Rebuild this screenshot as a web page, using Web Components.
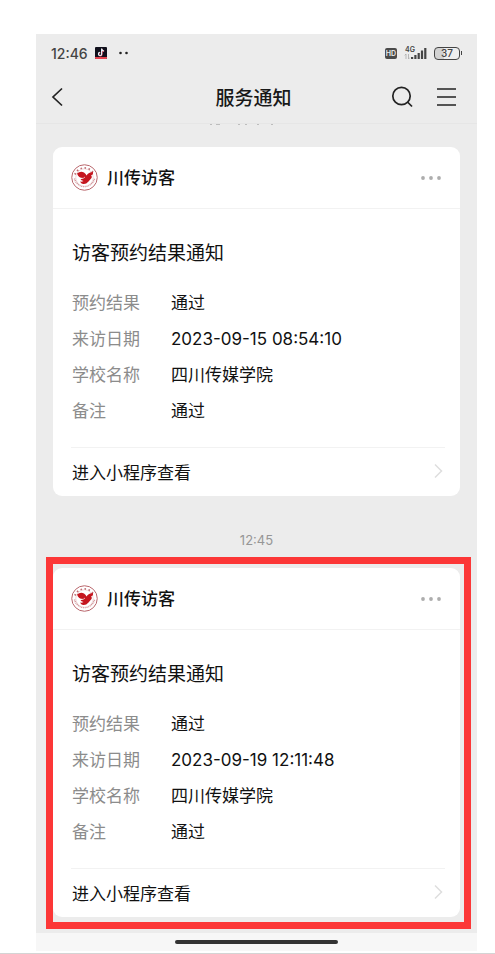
<!DOCTYPE html>
<html lang="zh-CN">
<head>
<meta charset="utf-8">
<meta name="viewport" content="width=device-width, initial-scale=1">
<title>服务通知</title>
<style>
    body {
        margin: 0;
        background: #fff;
        color: #191919;
        font-family: Inter, "Noto Sans CJK SC", sans-serif;
        font-size: 17px;
    }
</style>
</head>
<body>
<notice-page>
    <status-bar time="12:46" battery="37"></status-bar>
    <nav-bar heading="服务通知"></nav-bar>
    <message-feed>
        <notice-card sender="川传访客" heading="访客预约结果通知" result="通过" date="2023-09-15 08:54:10" school="四川传媒学院" remark="通过"></notice-card>
        <time-stamp>12:45</time-stamp>
        <focus-frame>
            <notice-card sender="川传访客" heading="访客预约结果通知" result="通过" date="2023-09-19 12:11:48" school="四川传媒学院" remark="通过"></notice-card>
        </focus-frame>
    </message-feed>
    <home-bar></home-bar>
</notice-page>

<script>
class NoticePage extends HTMLElement {
    constructor() {
        super();
        this.attachShadow({ mode: 'open' });
        this.shadowRoot.innerHTML = `
            <style>
                :host {
                    display: block;
                    padding: 34px 18px 2px 36px;
                    border-bottom: 1px solid #d4d4d4;
                }

                main {
                    display: flex;
                    flex-direction: column;
                    background: #ececec;
                }
            </style>
            <main><slot></slot></main>
        `;
    }
}

class StatusBar extends HTMLElement {
    constructor() {
        super();
        this.attachShadow({ mode: 'open' });
    }

    connectedCallback() {
        this.shadowRoot.innerHTML = `
            <style>
                :host {
                    display: flex;
                    align-items: center;
                    justify-content: space-between;
                    height: 38px;
                    padding: 0 15px;
                    color: #444;
                }

                div {
                    display: flex;
                    align-items: center;
                    gap: 7px;
                }

                time {
                    font-size: 14px;
                    font-weight: 500;
                }

                .dots {
                    margin-left: 5px;
                }

                .hd {
                    padding: 0 1px;
                    border-radius: 2px;
                    background: #4a4a4a;
                    color: #eee;
                    font-size: 7px;
                    font-weight: 600;
                    line-height: 11px;
                }

                .battery {
                    display: flex;
                    align-items: center;
                    gap: 1px;
                }

                .level {
                    box-sizing: border-box;
                    width: 26px;
                    border: 1px solid #444;
                    border-radius: 4px;
                    background: linear-gradient(90deg, #d2d2d2 37%, #eee 37%);
                    font-size: 10px;
                    font-weight: 500;
                    line-height: 11px;
                    text-align: center;
                }

                .cap {
                    width: 1px;
                    height: 4px;
                    background: #444;
                }
            </style>
            <div>
                <time>${this.getAttribute('time')}</time>
                <svg width="12" height="12" viewBox="0 0 12 12">
                    <rect width="12" height="12" rx="1" fill="#10101c"/>
                    <path d="M0 10h12v1q0 1-1 1H1q-1 0-1-1z" fill="#e5434f"/>
                    <path d="M6.6 1.5v5.4a1.6 1.6 0 1 1-1.6-1.6M6.6 2q.4 1.7 2.2 1.9" fill="none" stroke="#ed5870" stroke-width="1.2" transform="translate(.4 .3)"/>
                    <path d="M6.6 1.5v5.4a1.6 1.6 0 1 1-1.6-1.6M6.6 2q.4 1.7 2.2 1.9" fill="none" stroke="#e2fbff" stroke-width="1.1"/>
                </svg>
                <svg class="dots" width="9" height="4" viewBox="0 0 9 4">
                    <circle cx="1.5" cy="2" r="1.3" fill="#222"/>
                    <circle cx="7.5" cy="2" r="1.3" fill="#222"/>
                </svg>
            </div>
            <div>
                <span class="hd">HD</span>
                <svg width="23" height="15" viewBox="0 0 23 15">
                    <text x="1" y="6" font-size="7" font-weight="600" fill="#444">4G</text>
                    <path d="M2 8v5M.7 9.3L2 8M4.5 8v5l1.2-1.3" fill="none" stroke="#aaa" stroke-width=".8"/>
                    <path d="M7 11h2.200v2H7zM10.300 9h2.200v4h-2.200zM13.600 7h2.200v6h-2.200zM16.900 4.500h2.200V13h-2.200zM20.200 2h2.200v11h-2.200z" fill="#444"/>
                </svg>
                <span class="battery"><span class="level">${this.getAttribute('battery')}</span><span class="cap"></span></span>
            </div>
        `;
    }
}

class NavBar extends HTMLElement {
    constructor() {
        super();
        this.attachShadow({ mode: 'open' });
    }

    connectedCallback() {
        this.shadowRoot.innerHTML = `
            <style>
                :host {
                    display: block;
                    border-bottom: 1px solid #e6e6e6;
                }

                header {
                    display: grid;
                    grid-template-columns: 1fr auto 1fr;
                    align-items: center;
                    height: 49px;
                    padding: 0 20px 2px 14px;
                }

                h1 {
                    margin: 0;
                    font-size: 19px;
                    font-weight: 500;
                }

                button {
                    display: flex;
                    padding: 0;
                    border: 0;
                    background: none;
                    color: #222;
                    cursor: pointer;
                }

                .actions {
                    display: flex;
                    justify-content: flex-end;
                    gap: 22px;
                }

                svg {
                    fill: none;
                    stroke: currentColor;
                    stroke-width: 1.7;
                }
            </style>
            <header>
                <button type="button" aria-label="返回">
                    <svg width="14" height="22" viewBox="0 0 14 22"><path d="M12 2.500L3 11l9 8.500"/></svg>
                </button>
                <h1>${this.getAttribute('heading')}</h1>
                <div class="actions">
                    <button type="button" aria-label="搜索">
                        <svg width="24" height="24" viewBox="0 0 24 24"><circle cx="10.500" cy="11" r="8.700"/><path d="M16.500 17l4.500 4.500"/></svg>
                    </button>
                    <button type="button" aria-label="菜单">
                        <svg width="20" height="24" viewBox="0 0 20 24"><path d="M0 4h19M0 12h19M0 20h19"/></svg>
                    </button>
                </div>
            </header>
        `;
    }
}

class MessageFeed extends HTMLElement {
    constructor() {
        super();
        this.attachShadow({ mode: 'open' });
        this.shadowRoot.innerHTML = `
            <style>
                :host {
                    display: block;
                    padding: 0 17px 16px;
                }

                .edge {
                    display: block;
                    height: 23px;
                    margin: 0 auto;
                }
            </style>
            <!-- lower edge of the timestamp scrolled under the nav bar -->
            <svg class="edge" width="100" height="23" viewBox="0 0 100 23">
                <path d="M3 .5h2M9 .5h4M31 .5h2M38 .5h2M50 .5h2M64 .5h2" stroke="#bdbdbd"/>
            </svg>
            <slot></slot>
        `;
    }
}

class TimeStamp extends HTMLElement {
    constructor() {
        super();
        this.attachShadow({ mode: 'open' });
        this.shadowRoot.innerHTML = `
            <style>
                :host {
                    display: block;
                    padding: 34px 0 18px;
                    color: #969696;
                    font-size: 13px;
                    line-height: 20px;
                    text-align: center;
                }
            </style>
            <time><slot></slot></time>
        `;
    }
}

class FocusFrame extends HTMLElement {
    constructor() {
        super();
        this.attachShadow({ mode: 'open' });
        this.shadowRoot.innerHTML = `
            <style>
                :host {
                    display: block;
                    position: relative;
                }

                :host::after {
                    content: "";
                    position: absolute;
                    inset: -11px -11px -12px -7px;
                    border: 7px solid #fc3737;
                    pointer-events: none;
                }
            </style>
            <slot></slot>
        `;
    }
}

class SchoolLogo extends HTMLElement {
    constructor() {
        super();
        this.attachShadow({ mode: 'open' });
        this.shadowRoot.innerHTML = `
            <style>
                :host {
                    display: flex;
                }
            </style>
            <svg width="27" height="27" viewBox="0 0 54 54">
                <circle cx="27" cy="27" r="25.500" fill="#fff" stroke="#b9666c" stroke-width="2"/>
                <path d="M8 21a20.500 20.500 0 0 1 38 0" fill="none" stroke="#bd6a70" stroke-width="4" stroke-dasharray="3 5"/>
                <path d="M7 29a20.500 20.500 0 0 0 40 0" fill="none" stroke="#cf9195" stroke-width="3" stroke-dasharray="2 1.500"/>
                <circle cx="27" cy="27" r="17.500" fill="#fff" stroke="#e0b3b6" stroke-width="1"/>
                <path d="M12 19q7-6 14-2 4 3 5 6 4-7 13-7 1 5-4 7 3 2 1 5-3 3-6 7-5 6-11 5-4-1-6-5 4 1 7-1-5-1-6-4 3 0 5-2-9 0-12-9z" fill="#c5161f"/>
                <path d="M19 29q6 1 9-3" fill="none" stroke="#fff" stroke-width="1.300"/>
            </svg>
        `;
    }
}

class NoticeCard extends HTMLElement {
    constructor() {
        super();
        this.attachShadow({ mode: 'open' });
    }

    connectedCallback() {
        this.shadowRoot.innerHTML = `
            <style>
                :host {
                    display: block;
                    border-radius: 9px;
                    background: #fff;
                    color: #111;
                }

                header {
                    display: flex;
                    align-items: center;
                    gap: 9px;
                    height: 61px;
                    padding: 0 19px 0 18px;
                    border-bottom: 1px solid #f2f2f2;
                }

                h2, h3, dl, dd {
                    margin: 0;
                    font-weight: 400;
                }

                h2 {
                    flex: 1;
                    font-size: 17px;
                    font-weight: 500;
                    line-height: 24px;
                }

                button {
                    display: flex;
                    padding: 0;
                    border: 0;
                    background: none;
                    cursor: pointer;
                }

                .body {
                    padding: 31px 19px 24px;
                }

                h3 {
                    margin-bottom: 23px;
                    font-size: 19px;
                    line-height: 28px;
                }

                dl {
                    display: grid;
                    grid-template-columns: 87px 1fr;
                    gap: 12px;
                    line-height: 24px;
                }

                dt {
                    color: #8c8c8c;
                }

                a {
                    display: flex;
                    align-items: center;
                    justify-content: space-between;
                    height: 46px;
                    margin: 0 15px 0 18px;
                    padding: 0 0 2px 1px;
                    border-top: 1px solid #f2f2f2;
                    color: inherit;
                    text-decoration: none;
                }
            </style>
            <header>
                <school-logo></school-logo>
                <h2>${this.getAttribute('sender')}</h2>
                <button type="button" aria-label="更多">
                    <svg width="20" height="6" viewBox="0 0 20 6" fill="#adadad">
                        <circle cx="2" cy="3" r="1.900"/><circle cx="10" cy="3" r="1.900"/><circle cx="18" cy="3" r="1.900"/>
                    </svg>
                </button>
            </header>
            <div class="body">
                <h3>${this.getAttribute('heading')}</h3>
                <dl>
                    <dt>预约结果</dt><dd>${this.getAttribute('result')}</dd>
                    <dt>来访日期</dt><dd>${this.getAttribute('date')}</dd>
                    <dt>学校名称</dt><dd>${this.getAttribute('school')}</dd>
                    <dt>备注</dt><dd>${this.getAttribute('remark')}</dd>
                </dl>
            </div>
            <a href="#open">进入小程序查看
                <svg width="12" height="16" viewBox="0 0 12 16" fill="none" stroke="#dedede" stroke-width="1.500"><path d="M2 1.500L8.500 8 2 14.500"/></svg>
            </a>
        `;
    }
}

class HomeBar extends HTMLElement {
    constructor() {
        super();
        this.attachShadow({ mode: 'open' });
        this.shadowRoot.innerHTML = `
            <style>
                :host {
                    display: flex;
                    align-items: center;
                    justify-content: center;
                    height: 18px;
                    background: #f7f7f7;
                }

                div {
                    width: 37%;
                    height: 4px;
                    border-radius: 2px;
                    background: #333;
                }
            </style>
            <div></div>
        `;
    }
}

customElements.define('notice-page', NoticePage);
customElements.define('status-bar', StatusBar);
customElements.define('nav-bar', NavBar);
customElements.define('message-feed', MessageFeed);
customElements.define('time-stamp', TimeStamp);
customElements.define('focus-frame', FocusFrame);
customElements.define('school-logo', SchoolLogo);
customElements.define('notice-card', NoticeCard);
customElements.define('home-bar', HomeBar);
</script>
</body>
</html>
